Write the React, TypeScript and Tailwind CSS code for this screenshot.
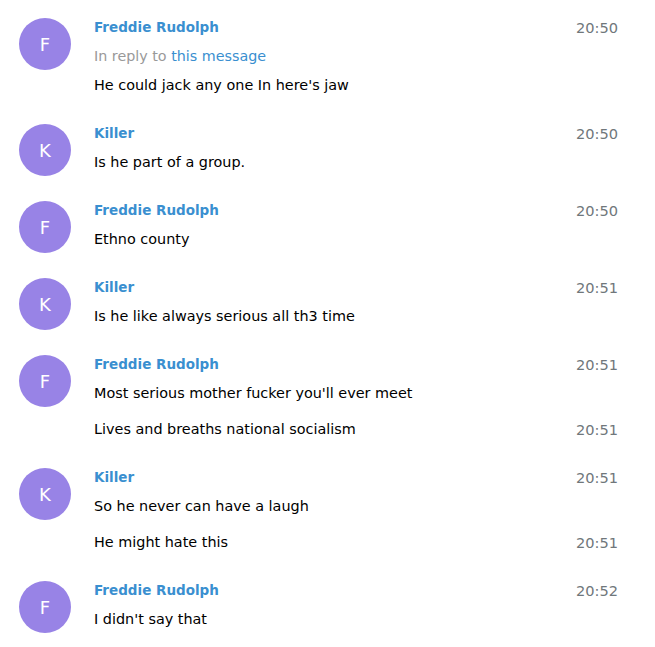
type Msg = { text: string; time: string };
type Group = {
  name: string;
  initial: string;
  time: string;
  reply?: boolean;
  messages: Msg[];
};

const groups: Group[] = [
  { name: "Freddie Rudolph", initial: "F", time: "20:50", reply: true, messages: [{ text: "He could jack any one In here's jaw", time: "20:50" }] },
  { name: "Killer", initial: "K", time: "20:50", messages: [{ text: "Is he part of a group.", time: "20:50" }] },
  { name: "Freddie Rudolph", initial: "F", time: "20:50", messages: [{ text: "Ethno county", time: "20:50" }] },
  { name: "Killer", initial: "K", time: "20:51", messages: [{ text: "Is he like always serious all th3 time", time: "20:51" }] },
  {
    name: "Freddie Rudolph",
    initial: "F",
    time: "20:51",
    messages: [
      { text: "Most serious mother fucker you'll ever meet", time: "20:51" },
      { text: "Lives and breaths national socialism", time: "20:51" },
    ],
  },
  {
    name: "Killer",
    initial: "K",
    time: "20:51",
    messages: [
      { text: "So he never can have a laugh", time: "20:51" },
      { text: "He might hate this", time: "20:51" },
    ],
  },
  { name: "Freddie Rudolph", initial: "F", time: "20:52", messages: [{ text: "I didn't say that", time: "20:52" }] },
];

function MessageGroup({ group }: { group: Group }) {
  return (
    <div className="flex">
      <div className="w-[52px] h-[52px] mt-[5px] rounded-full bg-[#9883e6] text-white flex items-center justify-center text-[18px] shrink-0">
        {group.initial}
      </div>
      <div className="flex-1 ml-[23px]">
        <div className="flex justify-between items-center h-[29px]">
          <span className="text-[#3a8fd0] font-bold text-[13.5px]">{group.name}</span>
          <span className="text-[#70777b] text-[14.6px]">{group.time}</span>
        </div>
        {group.reply && (
          <div className="h-[29px] flex items-center text-[14.3px] text-[#999999]">
            In reply to&nbsp;<span className="text-[#3a8fd0]">this message</span>
          </div>
        )}
        {group.messages.map((m, i) => (
          <div key={i} className={i > 0 ? "mt-[7px] flex justify-between items-center h-[29px]" : "flex items-center h-[29px]"}>
            <span className="text-[14.4px] text-black">{m.text}</span>
            {i > 0 && <span className="text-[#70777b] text-[14.6px]">{m.time}</span>}
          </div>
        ))}
      </div>
    </div>
  );
}

export default function App() {
  return (
    <div className="bg-white min-h-[647px] pt-[13px] pl-[19px] pr-[37px] flex flex-col gap-[19px] font-['DejaVu_Sans',sans-serif]">
      {groups.map((g, i) => (
        <MessageGroup key={i} group={g} />
      ))}
    </div>
  );
}
